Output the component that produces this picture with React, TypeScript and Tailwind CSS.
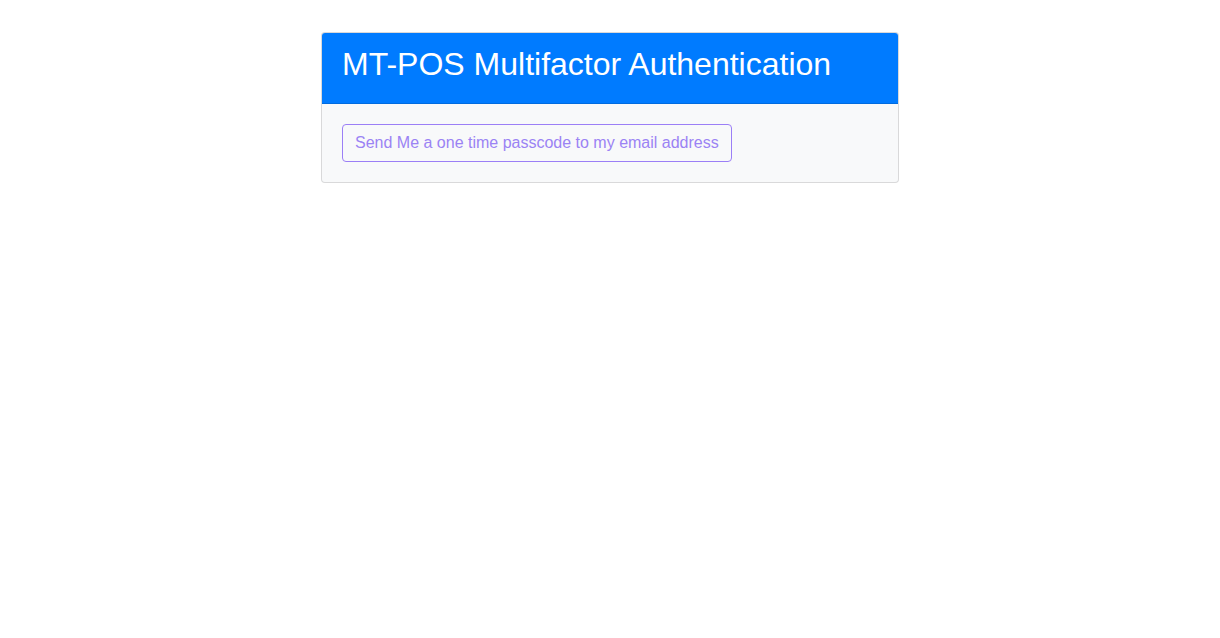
import React from "react";

export default function App() {
  return (
    <div className="min-h-[638px] bg-white pt-8 font-['Liberation_Sans',Arial,sans-serif]">
      <div className="mx-auto w-[578px] overflow-hidden rounded border border-[rgba(0,0,0,0.125)] bg-[#f8f9fa]">
        <div className="border-b border-[rgba(0,0,0,0.125)] bg-[#007bff] px-5 pt-3 pb-3">
          <h2 className="mb-2 text-[32px] leading-[1.2] font-normal text-white">
            MT-POS Multifactor Authentication
          </h2>
        </div>
        <div className="p-5">
          <button
            type="button"
            className="h-[38px] rounded border border-[#9b7ff6] px-3 text-base leading-6 text-[#9b83f4]"
          >
            Send Me a one time passcode to my email address
          </button>
        </div>
      </div>
    </div>
  );
}
